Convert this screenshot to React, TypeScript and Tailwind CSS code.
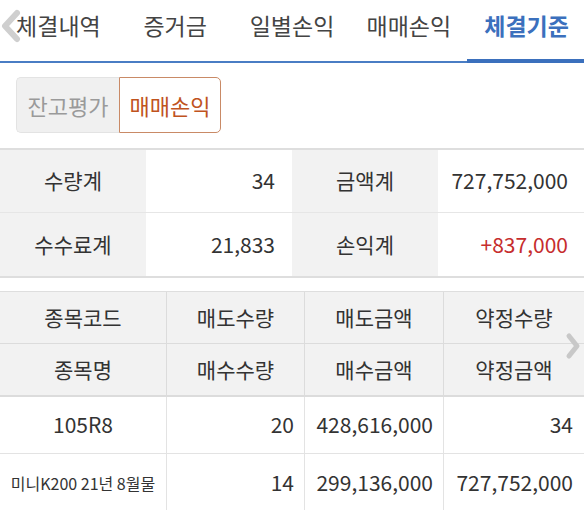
import React from 'react';

const tabs = ['체결내역', '증거금', '일별손익', '매매손익', '체결기준'];

const summary = [
  { label: '수량계', value: '34', label2: '금액계', value2: '727,752,000', red: false },
  { label: '수수료계', value: '21,833', label2: '손익계', value2: '+837,000', red: true },
];

export default function App() {
  return (
    <div
      className="relative w-[584px] h-[510px] overflow-hidden bg-white text-[#333]"
      style={{ fontFamily: '"Noto Sans CJK KR", "Noto Sans", sans-serif' }}
    >
      {/* tab bar */}
      <div className="relative grid grid-cols-5 h-[63px] border-b-2 border-[#4a7dc4]">
        {tabs.map((t, i) => (
          <div
            key={t}
            className={`flex items-start justify-center pt-[6px] text-[23px] leading-[38px] ${
              i === 4 ? 'text-[#3b70bd] font-bold border-b-[4px] border-[#3b70bd] -mb-[2px] pl-[2px]' : 'text-[#444]'
            }`}
          >
            {t}
          </div>
        ))}
        <svg className="absolute left-0 top-[9px]" width="22" height="34" viewBox="0 0 22 34">
          <path d="M17 4 L5 17 L17 30" fill="none" stroke="#cfcfcf" strokeWidth="6" strokeLinecap="round" strokeLinejoin="round" />
        </svg>
      </div>

      {/* segment */}
      <div className="flex pl-4 pt-[14px] pb-[15px]">
        <div className="flex h-[56px] text-[22px]">
          <div className="w-[103px] flex items-center justify-center bg-[#f0f0f0] text-[#9a9a9a] border border-r-0 border-[#e3e3e3] rounded-l-[5px]">
            잔고평가
          </div>
          <div className="w-[102px] flex items-center justify-center bg-white text-[#c0531e] border border-[#c98a66] rounded-r-[5px]">
            매매손익
          </div>
        </div>
      </div>

      {/* summary */}
      <div className="border-t-2 border-b-2 border-[#dedede] text-[21px]">
        {summary.map((r, i) => (
          <div key={r.label} className={`grid grid-cols-4 h-[63px] ${i === 0 ? 'border-b border-[#e6e6e6]' : ''}`}>
            <div className="bg-[#f2f2f2] flex items-center justify-center">{r.label}</div>
            <div className="flex items-center justify-end pr-[17px]">{r.value}</div>
            <div className="bg-[#f2f2f2] flex items-center justify-center">{r.label2}</div>
            <div className={`flex items-center justify-end pr-[16px] ${r.red ? 'text-[#c62d2d]' : ''}`}>{r.value2}</div>
          </div>
        ))}
      </div>

      {/* list */}
      <div className="relative mt-[13px] border-t border-[#dedede] text-[21px]">
        <div className="grid grid-cols-[167px_138px_139px_140px] h-[52px] bg-[#f2f2f2] border-b border-[#dcdcdc]">
          <div className="flex items-center justify-center border-r border-[#dcdcdc]">종목코드</div>
          <div className="flex items-center justify-center border-r border-[#dcdcdc]">매도수량</div>
          <div className="flex items-center justify-center border-r border-[#dcdcdc]">매도금액</div>
          <div className="flex items-center justify-center">약정수량</div>
        </div>
        <div className="grid grid-cols-[167px_138px_139px_140px] h-[53px] bg-[#f2f2f2] border-b-2 border-[#dcdcdc]">
          <div className="flex items-center justify-center border-r border-[#dcdcdc]">종목명</div>
          <div className="flex items-center justify-center border-r border-[#dcdcdc]">매수수량</div>
          <div className="flex items-center justify-center border-r border-[#dcdcdc]">매수금액</div>
          <div className="flex items-center justify-center">약정금액</div>
        </div>
        <div className="grid grid-cols-[167px_138px_139px_140px] h-[57px] border-b border-[#e3e3e3]">
          <div className="flex items-center justify-center border-r border-[#e3e3e3]">105R8</div>
          <div className="flex items-center justify-end pr-[10px] border-r border-[#e3e3e3]">20</div>
          <div className="flex items-center justify-end pr-[10px] border-r border-[#e3e3e3]">428,616,000</div>
          <div className="flex items-center justify-end pr-[11px]">34</div>
        </div>
        <div className="grid grid-cols-[167px_138px_139px_140px] h-[58px]">
          <div className="flex items-center justify-center border-r border-[#e3e3e3] text-[16px]">미니K200 21년 8월물</div>
          <div className="flex items-center justify-end pr-[10px] border-r border-[#e3e3e3]">14</div>
          <div className="flex items-center justify-end pr-[10px] border-r border-[#e3e3e3]">299,136,000</div>
          <div className="flex items-center justify-end pr-[11px]">727,752,000</div>
        </div>
        <svg className="absolute right-[2px] top-[40px]" width="18" height="28" viewBox="0 0 18 28">
          <path d="M5 4 L13 14 L5 24" fill="none" stroke="#c8c8c8" strokeWidth="5" strokeLinecap="round" strokeLinejoin="round" />
        </svg>
      </div>
    </div>
  );
}
